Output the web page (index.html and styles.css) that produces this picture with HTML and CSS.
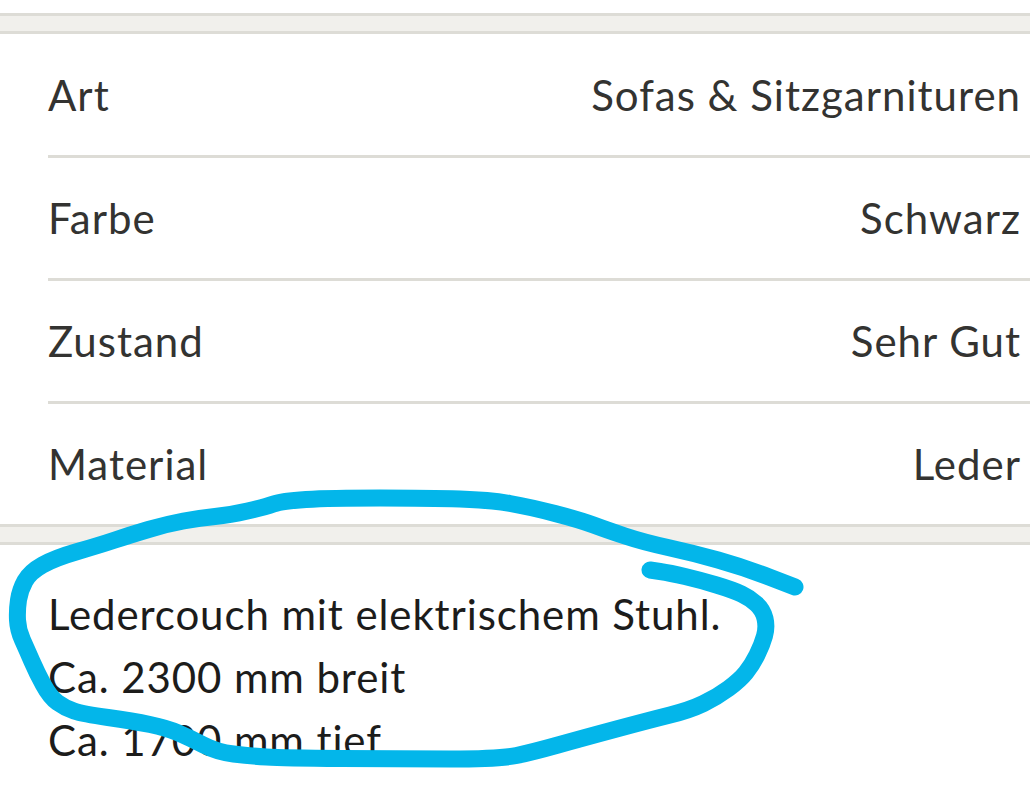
FILE: index.html
```html
<!DOCTYPE html>
<html lang="de">
<head>
<meta charset="utf-8">
<title>Details</title>
<link rel="stylesheet" href="styles.css">
</head>
<body>
<div class="page">
  <div class="top-space"></div>
  <div class="band"></div>
  <section class="attrs">
    <div class="row"><span class="label">Art</span><span class="value">Sofas &amp; Sitzgarnituren</span></div>
    <div class="row"><span class="label">Farbe</span><span class="value">Schwarz</span></div>
    <div class="row"><span class="label">Zustand</span><span class="value">Sehr Gut</span></div>
    <div class="row"><span class="label">Material</span><span class="value">Leder</span></div>
  </section>
  <div class="band"></div>
  <section class="desc">
    <p>Ledercouch mit elektrischem Stuhl.</p>
    <p>Ca. 2300 mm breit</p>
    <p>Ca. 1700 mm tief</p>
  </section>
  <svg class="scribble" width="1030" height="790" viewBox="0 0 1030 790" aria-hidden="true">
    <path d="M795,587 L769,577 Q743,567 718,560 Q693,553 668,547.5 Q643,542 625,536 Q607,530 593.5,525 Q580,520 555,513.5 Q530,507 510,503.5 Q490,500 460,499 Q430,498 380,498 Q330,498 306,499.5 Q282,501 273.5,504 Q265,507 247.5,511 Q230,515 215,516.5 Q200,518 183.5,521 Q167,524 148.5,529.5 Q130,535 115,540 Q100,545 77.5,551.5 Q55,558 42.5,565 Q30,572 25,581 Q20,590 18.5,600 Q17,610 17.5,620 Q18,630 22.5,640 Q27,650 32,661.5 Q37,673 43.5,685 Q50,697 57.5,702.5 Q65,708 74,711 Q83,714 108,717.5 Q133,721 150,724.5 Q167,728 178.5,733 Q190,738 203.5,745 Q217,752 233.5,754 Q250,756 266.5,757 Q283,758 341.5,758.5 Q400,759 450,759 Q500,759 516.5,755.5 Q533,752 558,745 Q583,738 616.5,729 Q650,720 670,715 Q690,710 703.5,703.5 Q717,697 728.5,688.5 Q740,680 746,672.5 Q752,665 757,655 Q762,645 764.5,636 Q767,627 765,618.5 Q763,610 756.5,604 Q750,598 741.5,594 Q733,590 716.5,585 Q700,580 685,576.5 Q670,573 660,571.5 L650,570" />
  </svg>
</div>
</body>
</html>
```

FILE: styles.css
```css
html, body {
  margin: 0;
  padding: 0;
  background: #ffffff;
}
body {
  font-family: Lato, "Open Sans", sans-serif;
  color: #333331;
  font-variant-ligatures: none;
}
.page {
  position: relative;
  width: 1030px;
  height: 790px;
  overflow: hidden;
}
.top-space {
  height: 13px;
}
.band {
  height: 15px;
  background: #f1f0ec;
  border-top: 3px solid #dddcd6;
  border-bottom: 3px solid #dddcd6;
}
.attrs {
  padding: 1px 0 0 48px;
}
.row {
  display: flex;
  justify-content: space-between;
  align-items: center;
  height: 120px;
  padding-right: 9px;
  border-bottom: 3px solid #dddcd6;
  font-size: 42px;
  letter-spacing: 1px;
}
.row:last-child {
  border-bottom: none;
}
.desc {
  padding: 38px 0 0 48px;
  font-size: 42px;
  line-height: 63px;
  letter-spacing: 0.9px;
  color: #1c1c1b;
}
.desc p {
  margin: 0;
}
.scribble {
  position: absolute;
  left: 0;
  top: 0;
  pointer-events: none;
}
.scribble path {
  fill: none;
  stroke: #03b6ea;
  stroke-width: 17;
  stroke-linecap: round;
  stroke-linejoin: round;
}
```
